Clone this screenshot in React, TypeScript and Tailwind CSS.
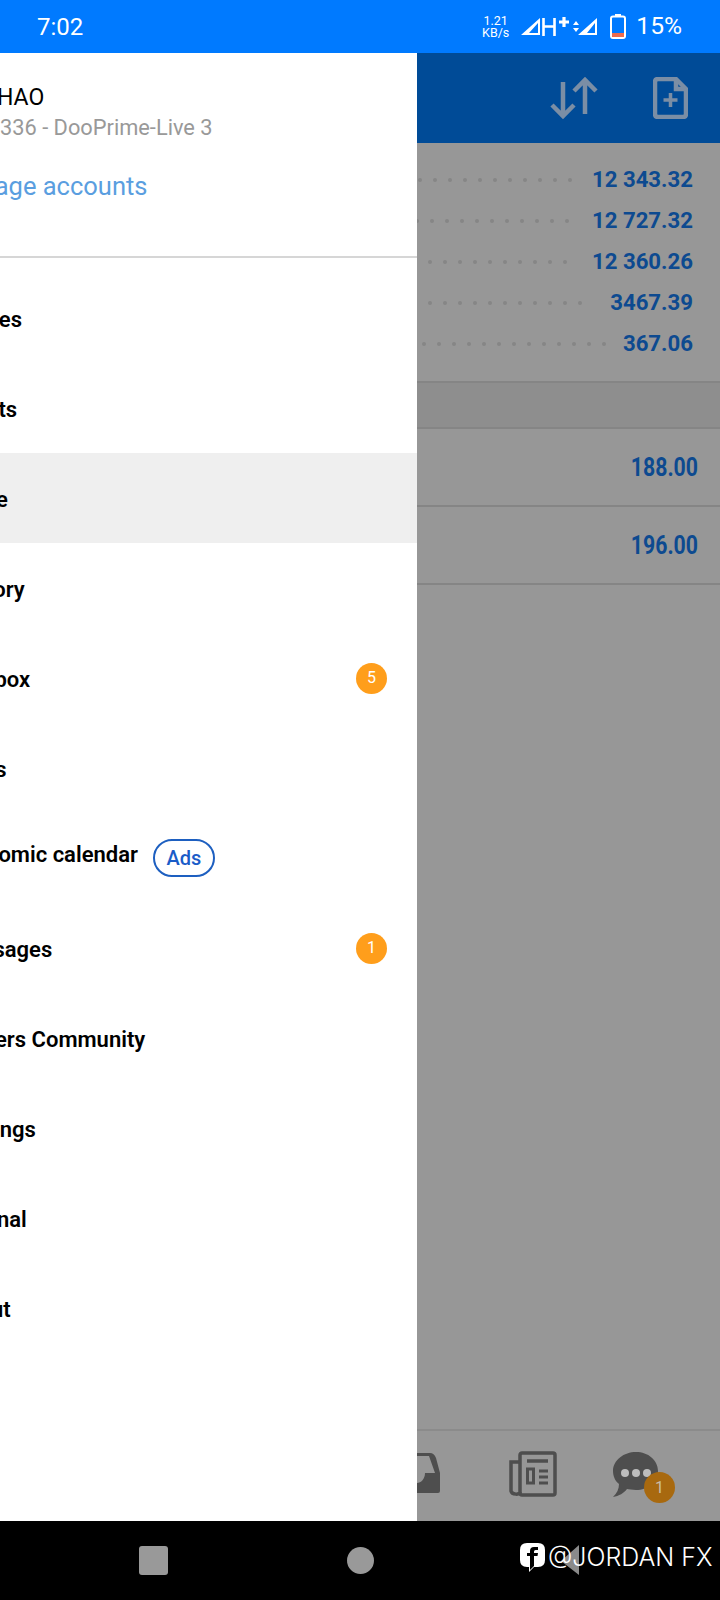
import type { ReactNode } from "react"

const ROBOTO = "font-['Roboto',sans-serif]"

const MENU: { label: string; badge?: string; ads?: boolean; active?: boolean }[] = [
  { label: "Quotes" },
  { label: "Charts" },
  { label: "Trade", active: true },
  { label: "History" },
  { label: "Mailbox", badge: "5" },
  { label: "News" },
  { label: "Economic calendar", ads: true },
  { label: "Messages", badge: "1" },
  { label: "Traders Community" },
  { label: "Settings" },
  { label: "Journal" },
  { label: "About" },
]

const LABEL_OFFSET: Record<string, string> = {
  Quotes: "-ml-[48.5px]",
  Charts: "-ml-[48.5px]",
  Trade: "-ml-[48.5px]",
  History: "-ml-[46.5px]",
  Mailbox: "-ml-[48px]",
  News: "-ml-[48.5px]",
  "Economic calendar": "-ml-[50px]",
  Messages: "-ml-[49px]",
  "Traders Community": "-ml-[49.5px]",
  Settings: "-ml-[46px]",
  Journal: "-ml-[48px]",
  About: "-ml-[48.5px]",
}

const BALANCES = [
  { value: "12 343.32", dots: 12, pad: "pr-[148px]" },
  { value: "12 727.32", dots: 11, pad: "pr-[151px]" },
  { value: "12 360.26", dots: 10, pad: "pr-[153px]" },
  { value: "3467.39", dots: 11, pad: "pr-[138px]" },
  { value: "367.06", dots: 13, pad: "pr-[114px]" },
]

function Badge({ children }: { children: ReactNode }) {
  return (
    <span className="flex h-[31px] w-[31px] items-center justify-center rounded-full bg-[#ff9e1b] text-[16px] text-white">
      {children}
    </span>
  )
}

function StatusIcons() {
  return (
    <div className="flex items-center">
      <div className="mr-[12px] flex flex-col items-center text-[12.5px] leading-[12px] text-white">
        <span>1.21</span>
        <span>KB/s</span>
      </div>
      <svg width="77" height="28" viewBox="0 0 77 28" fill="none" className="mr-[12px]">
        <path d="M0 22 L19 5 V22 Z M8 20 H17 V10 Z" fill="#fff" fillRule="evenodd" />
        <path d="M22.5 5 V23 M33.5 5 V23 M22.5 13.5 H33.5" stroke="#fff" strokeWidth="2.6" />
        <path d="M43 4 V14 M38 9 H48" stroke="#fff" strokeWidth="3.2" />
        <path d="M52 12 L55 8 L58 12 Z M52 15 L55 19 L58 15 Z" fill="#fff" />
        <path d="M57 22 L76 5 V22 Z M66 20 H74 V10 Z" fill="#fff" fillRule="evenodd" />
      </svg>
      <svg width="16" height="25" viewBox="0 0 16 25" className="mr-[10px]">
        <rect x="5" y="0" width="6" height="3" fill="#fff" />
        <rect x="1" y="2.5" width="14" height="21.5" rx="2" fill="none" stroke="#fff" strokeWidth="2" />
        <rect x="2" y="19" width="12" height="4" fill="#ee6b4d" />
      </svg>
      <span className="text-[24.6px] leading-none text-white">15%</span>
    </div>
  )
}

function NewsIcon() {
  return (
    <svg width="48" height="46" viewBox="0 0 48 46" fill="none" stroke="#4e4e4e" strokeWidth="3.5">
      <rect x="11" y="2" width="35" height="42" rx="2" />
      <path d="M11 41 C11 44 3 44 2 40 V11 H11" />
      <path d="M18 10 H39" />
      <rect x="18.5" y="18" width="6" height="14" strokeWidth="3" />
      <path d="M30 20 H39 M30 26 H39 M30 32 H39" strokeWidth="3" />
    </svg>
  )
}

function ChatIcon() {
  return (
    <svg width="46" height="47" viewBox="0 0 46 47">
      <path
        d="M23 1 C35 1 45 9 45 20 C45 31 35 39 23 39 C19 39 16 38 14 38 C11 42 6 45 0 46 C4 42 6 38 6 33 C2 30 0 25 0 20 C0 9 11 1 23 1 Z"
        fill="#4e4e4e"
      />
      <circle cx="12" cy="22" r="4" fill="#bdbdbd" />
      <circle cx="23" cy="22" r="4" fill="#bdbdbd" />
      <circle cx="34" cy="22" r="4" fill="#bdbdbd" />
    </svg>
  )
}

function Backdrop() {
  return (
    <div className="flex min-w-0 flex-1 flex-col overflow-hidden bg-[#979797]">
      <div className="flex h-[90px] shrink-0 items-center justify-end gap-[55px] bg-[#004b97] pr-[32px]">
        <svg width="48" height="44" viewBox="0 0 48 44" fill="none" stroke="#7b8ea5" strokeWidth="4.5">
          <path d="M13 6 V40 M2 29 L13 40 L24 29" />
          <path d="M35 38 V4 M24 15 L35 4 L46 15" />
        </svg>
        <svg width="35" height="42" viewBox="0 0 35 42" fill="none" stroke="#7b8ea5" strokeWidth="4.5">
          <path d="M5 2 H23 L33 12 V37 Q33 40 30 40 H5 Q2 40 2 37 V5 Q2 2 5 2 Z" strokeLinejoin="round" />
          <path d="M23 3 V12 H32" />
          <path d="M17.5 16 V30 M10.5 23 H24.5" strokeWidth="3.5" />
        </svg>
      </div>

      <div className={`flex h-[238px] shrink-0 flex-col pt-[16px] ${ROBOTO}`}>
        {BALANCES.map((b) => (
          <div key={b.value} className="relative flex h-[41px] shrink-0 items-center justify-end overflow-hidden">
            <div className={`flex items-center justify-end gap-[11px] ${b.pad}`}>
              {Array.from({ length: b.dots }).map((_, i) => (
                <span key={i} className="h-[4px] w-[4px] shrink-0 rounded-full bg-[#868686]" />
              ))}
            </div>
            <span className="absolute right-[27px] text-[22.2px] font-bold leading-none text-[#0d4a90]">{b.value}</span>
          </div>
        ))}
      </div>

      <div className="h-[48px] shrink-0 border-y-2 border-[#858585] bg-[#8e8e8e]" />
      {["188.00", "196.00"].map((v) => (
        <div key={v} className={`flex h-[78px] shrink-0 items-center justify-end border-b-2 border-[#858585] pr-[22px] ${ROBOTO}`}>
          <span className="origin-right scale-x-[0.85] text-[25px] font-bold leading-none text-[#0d4a90]">{v}</span>
        </div>
      ))}

      <div className="flex-1" />

      <div className="relative flex h-[92px] shrink-0 items-start border-t-2 border-[#8b8b8b] pt-[20px]">
        <svg width="24" height="41" viewBox="0 0 24 41" className="mt-[2px] shrink-0">
          <path
            d="M0 0 H13 Q17 0 19 5 L23 20 V38 Q23 40 21 40 H0 Z M0 3 H12 L18 20 H8 C8 26 4 30 0 30 Z"
            fill="#4e4e4e"
            fillRule="evenodd"
          />
        </svg>
        <div className="ml-[68px] shrink-0">
          <NewsIcon />
        </div>
        <div className="ml-[56px] shrink-0">
          <ChatIcon />
        </div>
        <span className="absolute left-[227px] top-[41px] flex h-[31px] w-[31px] items-center justify-center rounded-full bg-[#a8690f] text-[16px] text-[#c9bda8]">
          1
        </span>
      </div>
    </div>
  )
}

function Drawer() {
  return (
    <aside className={`flex w-[417px] shrink-0 flex-col overflow-hidden bg-white ${ROBOTO}`}>
      <div className="h-[205px] shrink-0 border-b-2 border-[#d6d6d6] pt-[32px]">
        <div className="-ml-[3px] whitespace-nowrap text-[23px] leading-[26px] text-black">HAO</div>
        <div className="mt-[4px] whitespace-nowrap text-[21.8px] leading-[26px] text-[#999999]">336 - DooPrime-Live 3</div>
        <div className="-ml-[55.5px] mt-[31px] whitespace-nowrap text-[25.5px] leading-[28px] text-[#5a9ee0]">Manage accounts</div>
      </div>
      <nav className="flex flex-col pt-[15px]">
        {MENU.map((m) => (
          <div
            key={m.label}
            className={`flex h-[90px] shrink-0 items-center justify-between pr-[30px] ${m.active ? "bg-[#efefef]" : ""}`}
          >
            <div className="flex items-center">
              <span className={`whitespace-nowrap text-[22px] font-semibold leading-none text-black ${LABEL_OFFSET[m.label]} ${m.ads ? "pb-[6px]" : "pt-[4px]"}`}>
                {m.label}
              </span>
              {m.ads && (
                <span className="ml-[15px] flex h-[38px] w-[62px] items-center justify-center rounded-full border-2 border-[#1d5fc0] text-[20px] font-medium text-[#1a5cc8]">
                  Ads
                </span>
              )}
            </div>
            {m.badge && <Badge>{m.badge}</Badge>}
          </div>
        ))}
      </nav>
    </aside>
  )
}

function NavBar() {
  return (
    <div className="relative flex h-[79px] shrink-0 items-center bg-black pl-[139px]">
      <span className="h-[29px] w-[29px] rounded-[3px] bg-[#999999]" />
      <span className="ml-[179px] h-[27px] w-[27px] rounded-full bg-[#999999]" />
      <svg width="18" height="32" viewBox="0 0 18 32" className="absolute left-[561px] top-[23px]">
        <path d="M18 1 V31 L0 17 Z" fill="#8a8a8a" />
      </svg>
      {/* watermark burned into the capture */}
      <div className="absolute left-[520px] top-[22px] flex items-center">
        <svg width="25" height="29" viewBox="0 0 25 29">
          <path d="M7 0 H18 Q25 0 25 7 V17 Q25 24 18 24 H14 L9 29 V24 H7 Q0 24 0 17 V7 Q0 0 7 0 Z" fill="#fff" />
          <path d="M10 27 V13 H7 V10 H10 V8 Q10 4 14 4 H18 V7 H15.5 Q14 7 14 8.5 V10 H18 L17.5 13 H14 V23 Z" fill="#000" />
        </svg>
        <span className="ml-[3px] whitespace-nowrap font-['Inter',sans-serif] text-[25px] font-light leading-none text-white">@JORDAN FX</span>
      </div>
    </div>
  )
}

export default function App() {
  return (
    <div className={`flex h-[1600px] w-[720px] flex-col overflow-hidden ${ROBOTO}`}>
      <div className="flex h-[53px] shrink-0 items-center justify-between bg-[#007aff] pl-[37px] pr-[38px]">
        <span className="text-[24px] leading-none text-white">7:02</span>
        <StatusIcons />
      </div>
      <div className="flex min-h-0 flex-1">
        <Drawer />
        <Backdrop />
      </div>
      <NavBar />
    </div>
  )
}
